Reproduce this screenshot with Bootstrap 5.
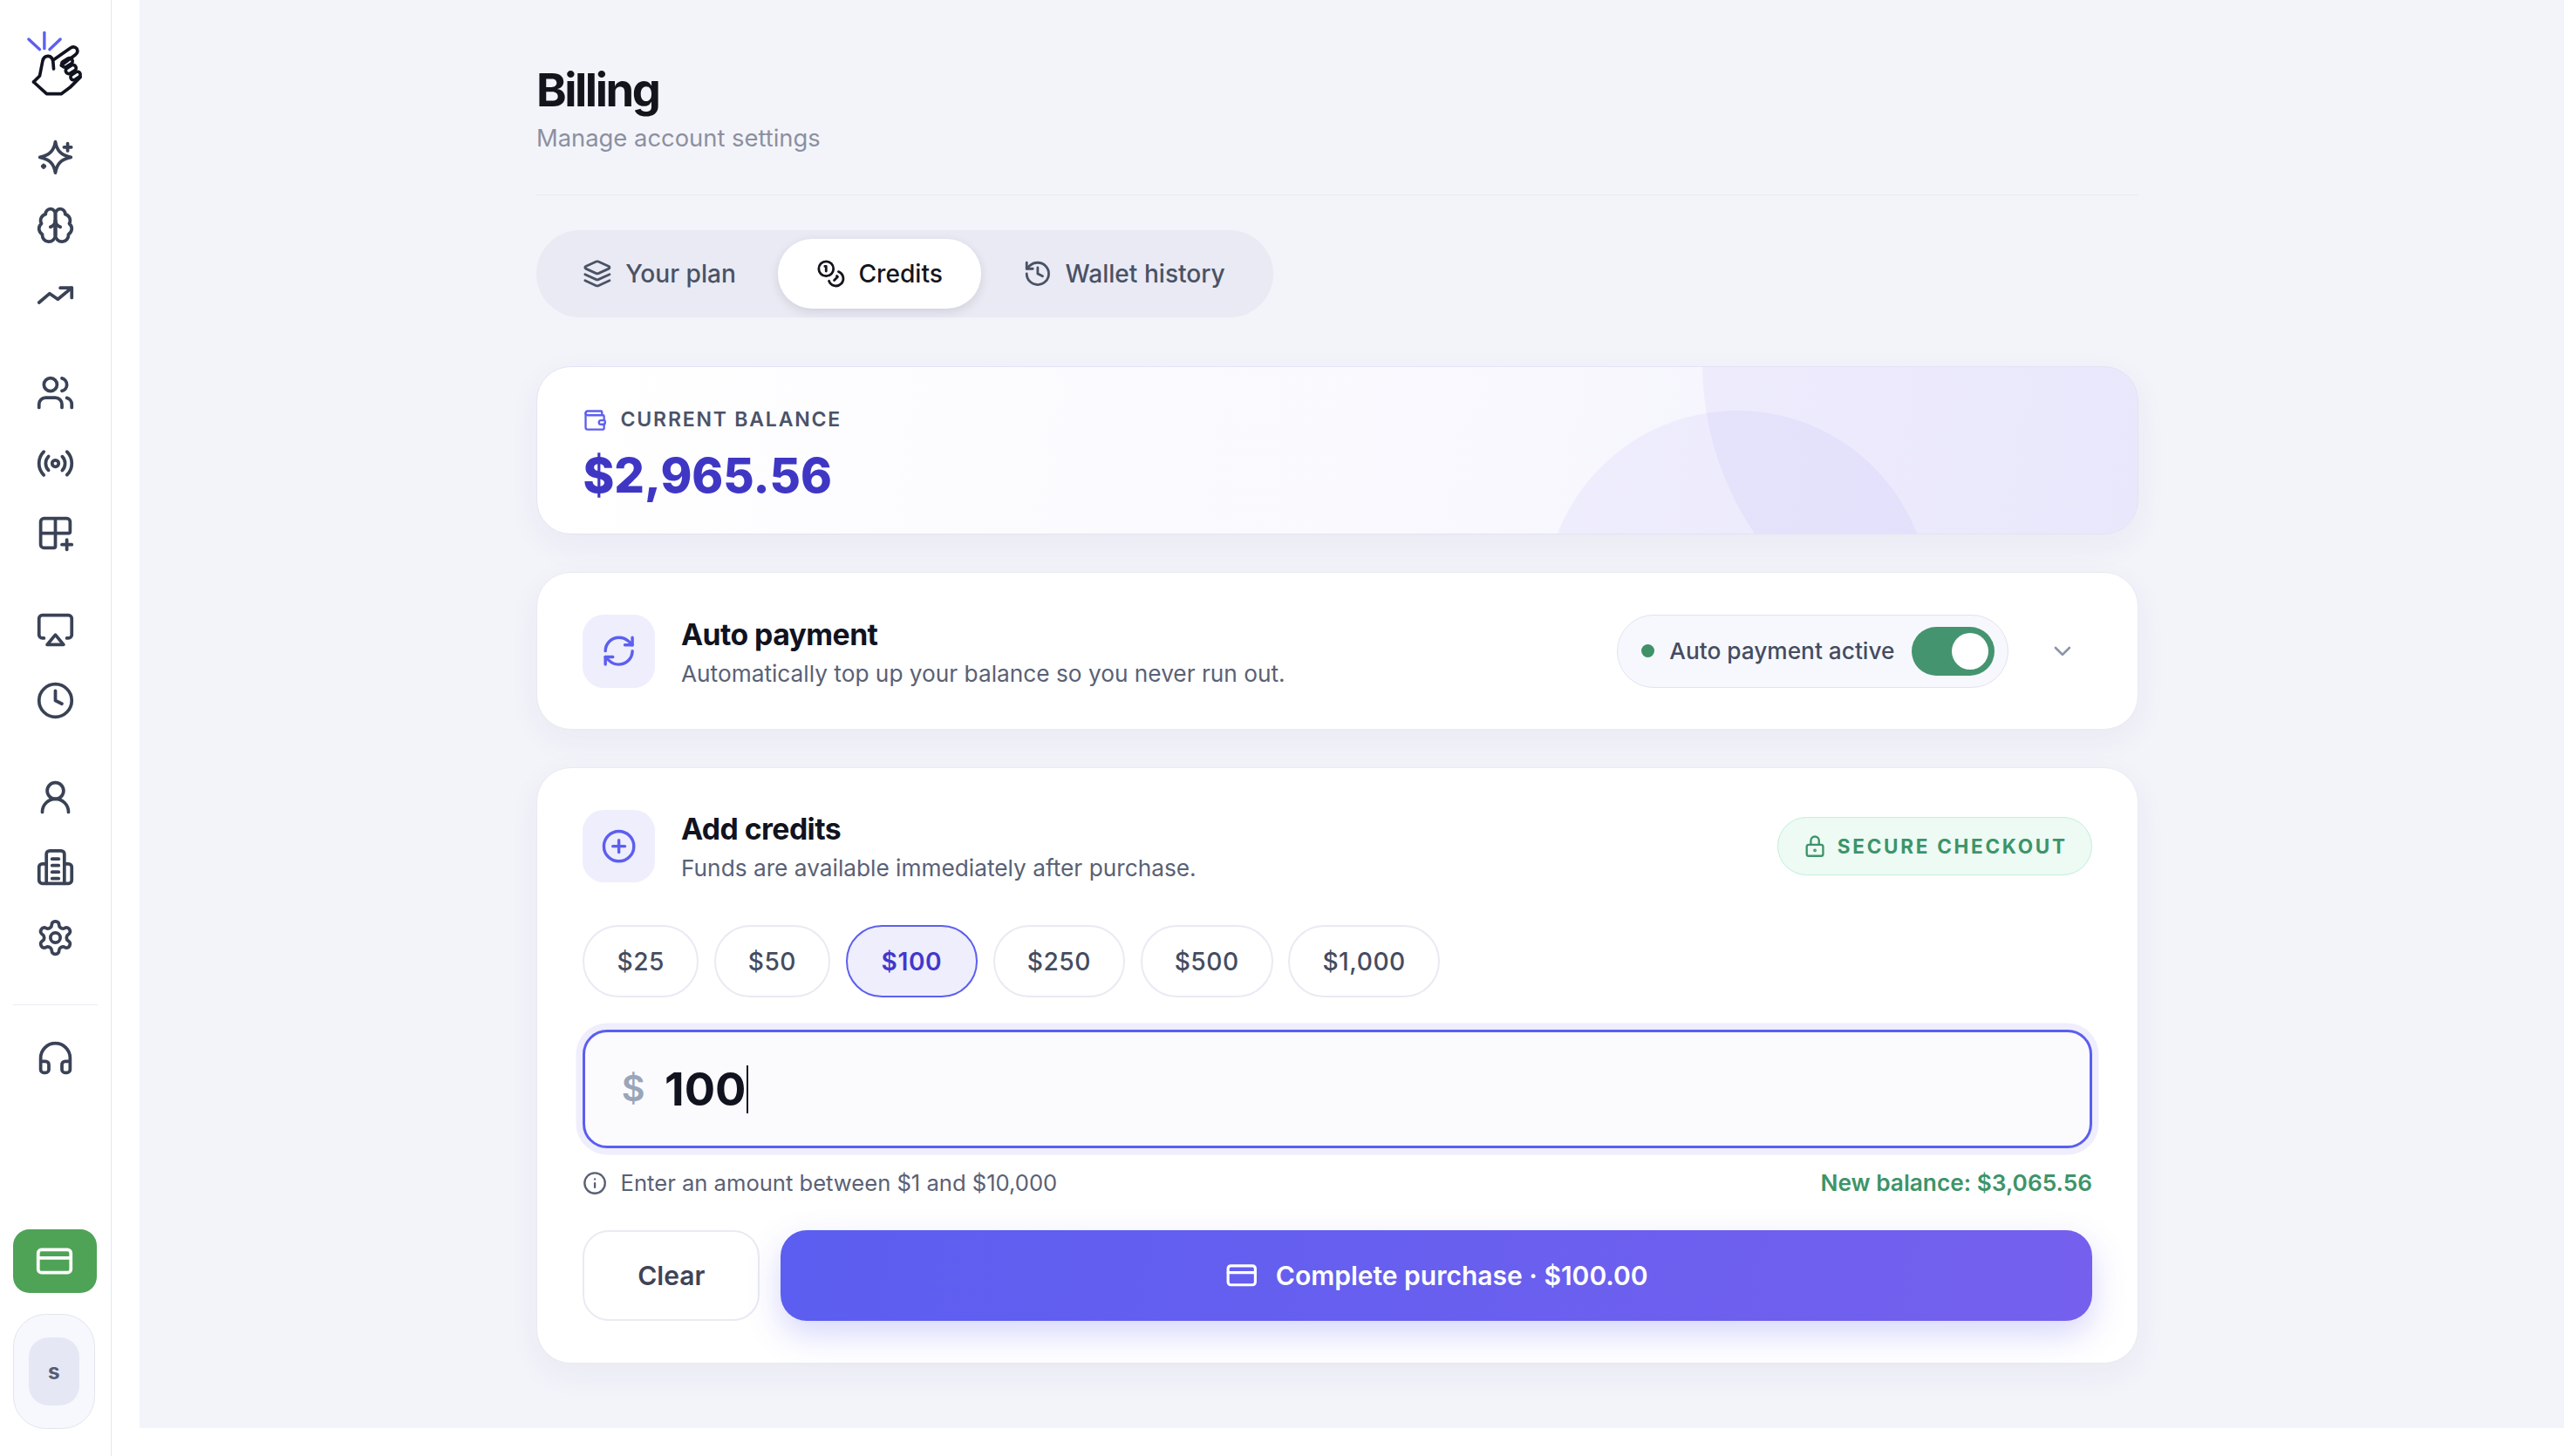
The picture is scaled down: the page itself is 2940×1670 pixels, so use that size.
<!DOCTYPE html>
<html lang="en">
<head>
  <meta charset="UTF-8" />
  <meta name="viewport" content="width=device-width, initial-scale=1.0" />
  <title>Billing</title>
  <link rel="stylesheet" href="https://cdn.jsdelivr.net/npm/bootstrap@5.3.0/dist/css/bootstrap.min.css" />
  <style>
    html { zoom: 1.875; overflow: hidden; }
    body {
      font-family: Inter, "Liberation Sans", sans-serif;
      background: #fff;
      overflow: hidden;
    }
    svg.ico { fill: none; stroke: currentColor; stroke-width: 2; stroke-linecap: round; stroke-linejoin: round; flex-shrink: 0; }
    .app-shell { height: 890.67px; }

    .side-rail {
      width: 68px;
      flex-shrink: 0;
      border-right: 1px solid #e5e6ee;
      color: #3a4256;
      padding: 13.3px 8px 16.7px 8px;
    }
    .rail-logo { margin-left: -8px; margin-right: -8px; margin-bottom: 12.2px; }
    .rail-group { margin-bottom: 16.2px; }
    .rail-item { height: 43px; color: inherit; }
    .rail-line { border-top: 1px solid #eceef2; margin-top: 19.4px; margin-bottom: 10.5px; }
    .rail-billing { height: 39px; background: #4fa357; color: #fff; border-radius: 10px; width: 51px; }
    .rail-user {
      height: 70px; width: 50px; margin-top: 13px;
      background: #f7f8fd; border: 1px solid #e3e5ec; border-radius: 20px;
    }
    .rail-avatar {
      width: 31px; height: 42px; border-radius: 12px; background: #e5e7f5;
      color: #555d73; font-size: 13px; font-weight: 700;
    }

    .main-pane {
      margin-left: 17.33px;
      height: 873.6px;
      background: #f3f4fa;
      padding: 38.4px 0 0 242.67px;
    }
    .page-col { width: 980px; }
    .page-title { font-size: 28px; font-weight: 700; letter-spacing: -1.3px; line-height: 33.6px; color: #14151c; margin: 0 0 1px; }
    .page-sub { font-size: 14.6px; line-height: 22.5px; color: #8b90a0; margin: 0; }
    .page-head { border-bottom: 1px solid #e9eaf1; padding-bottom: 23.5px; margin-bottom: 21px; }

    .tab-track { background: #e9eaf3; border-radius: 27px; padding: 5.5px; gap: 2.5px; width: 450.5px; height: 53.5px; flex-wrap: nowrap; }
    .tab-track .nav-link {
      display: flex; align-items: center; gap: 8px;
      height: 42.5px; padding: 0 23px; border-radius: 21px; white-space: nowrap;
      font-size: 15px; font-weight: 500; color: #4a5266;
    }
    .tab-track .nav-link.active { background: #fff; color: #14151c; box-shadow: 0 2px 6px rgba(30,30,60,.12); padding: 0 23.5px; }

    .bill-card {
      border: 1px solid #e9eaf2;
      border-radius: 21px;
      background: #fff;
      box-shadow: 0 6px 20px rgba(40,40,90,.05);
      margin-bottom: 23px;
    }
    .balance-card {
      height: 103px;
      margin-top: 30px;
      border-color: #e4e3f4;
      padding: 23.5px 28px;
      overflow: hidden;
      background: linear-gradient(100deg, #fff 0%, #f8f8fe 60%, #f2f1fc 100%);
    }
    .blob-a, .blob-b { position: absolute; border-radius: 50%; background: rgba(99,91,240,.06); }
    .blob-a { width: 370px; height: 370px; left: 712.5px; top: -187px; }
    .blob-b { width: 236px; height: 236px; left: 616px; top: 26.5px; }
    .balance-label { font-size: 12.3px; font-weight: 600; letter-spacing: .95px; color: #4b5368; line-height: 18px; position: relative; }
    .balance-icon { color: #5d5fef; }
    .balance-sum { font-size: 29px; font-weight: 800; color: #3f37c4; line-height: 38px; margin-top: 6px; position: relative; }

    .auto-card { height: 96.5px; padding: 0 28px; }
    .tile { width: 44px; height: 44.5px; border-radius: 13px; background: #eeeefd; color: #5d5fef; flex-shrink: 0; }
    .card-text-wrap { margin-top: 3px; }
    .card-name { font-size: 18px; font-weight: 700; letter-spacing: -.3px; color: #11131f; line-height: 24px; margin: 0; }
    .card-note { font-size: 14px; color: #5a6175; line-height: 24px; margin: 0; }
    .status-chip {
      width: 239.5px; height: 44.5px; padding: 0 8px 0 14px; gap: 9.5px;
      background: #f7f8fd; border: 1px solid #e2e2f2; border-radius: 23px;
      font-size: 14px; font-weight: 500; color: #454c60;
    }
    .status-dot { width: 8px; height: 8px; border-radius: 50%; background: #3f9168; flex-shrink: 0; }
    .status-chip .form-check { margin: 0 0 0 auto; padding: 0; min-height: 0; display: flex; }
    .status-chip .form-check-input { width: 51px; height: 30px; margin: 0; border: 0; background-color: #459470; cursor: pointer; }
    .chev { color: #8b94a8; margin-left: 24.5px; margin-right: 9.5px; }

    .credit-card { height: 364.5px; padding: 22px 28px 0; margin-bottom: 0; }
    .secure-tag {
      height: 36px; padding: 0 14.5px; gap: 6.5px; background: #edfbf4; border: 1px solid #c3eeda; border-radius: 18px;
      font-size: 12px; font-weight: 700; letter-spacing: 1.45px; color: #3d9469;
    }
    .preset-row { gap: 9.5px; margin-top: 23px; }
    .preset-btn {
      height: 44px; padding: 0 19.7px; border-radius: 22px; background: #fff;
      border: 1.5px solid #e9eaf3; color: #454c60; font-size: 15px; font-weight: 500; letter-spacing: .3px;
    }
    .preset-btn.active, .preset-btn.active:hover { background: #eeeefd; border-color: #5d5fef; color: #4338ca; font-weight: 600; padding: 0 20.7px; }
    .amount-box {
      height: 72.5px; margin-top: 20px; padding: 0 22px; gap: 12px;
      background: #fbfbfe; border: 2px solid #5b5ef0; border-radius: 15px;
      box-shadow: 0 0 0 4px #efeefc;
    }
    .amount-sign { font-size: 22px; font-weight: 600; color: #9aa5b8; }
    .amount-num { font-size: 28px; font-weight: 700; color: #11131f; line-height: 30px; }
    .amount-caret { width: 1.5px; height: 29px; background: #11131f; margin-left: -12px; }
    .hint-row { margin-top: 11px; font-size: 13.65px; line-height: 20px; color: #5a6175; }
    .hint-new { color: #3d9469; font-weight: 600; font-size: 14px; }
    .action-row { gap: 13px; margin-top: 19px; }
    .clear-btn {
      width: 108px; height: 55.5px; border-radius: 16px; background: #fff;
      border: 1.5px solid #e9eaf3; color: #3f4356; font-size: 16px; font-weight: 600;
    }
    .buy-btn {
      height: 55.5px; border-radius: 16px; border: 0; gap: 11px; color: #fff;
      background: linear-gradient(100deg, #5b5ef0, #7560ee);
      box-shadow: 0 8px 20px rgba(93,95,239,.25);
      font-size: 16px; font-weight: 600;
    }
    .buy-btn:hover, .buy-btn:active { color: #fff; background: linear-gradient(100deg, #5b5ef0, #7560ee); }
  </style>
</head>
<body>
<div class="app-shell d-flex">

  <!-- left rail -->
  <aside class="side-rail d-flex flex-column">
    <a class="rail-logo d-block" href="#">
      <svg class="d-block mx-auto" width="48" height="48" viewBox="-6.6 0 270 270" fill="none" stroke-linecap="round" stroke-linejoin="round">
        <g stroke="#5d5fef" stroke-width="10"><path d="M92 37v55"/><path d="M38 60l38 35"/><path d="M147 60l-37 35"/></g>
        <g stroke="#11131f" stroke-width="11">
          <path d="M122 132 182 90Q195 82 204 93Q210 105 198 114L150 150"/>
          <path d="M55 207 76 186 86 135Q90 117 106 118Q120 120 122 138L124 162"/>
          <path d="M55 207 100 248H150L180 226 216 190"/>
          <rect x="150" y="130" width="40" height="21" rx="10" transform="rotate(-32 170 140)"/>
          <rect x="164" y="153" width="38" height="21" rx="10" transform="rotate(-32 183 163)"/>
          <rect x="181" y="176" width="36" height="20" rx="10" transform="rotate(-32 199 186)"/>
        </g>
      </svg>
    </a>

    <div class="rail-group">
      <a class="rail-item d-flex align-items-center justify-content-center" href="#">
        <svg class="ico" width="24" height="24" viewBox="0 0 24 24"><path d="M12 3.500c.8 5 3 8.200 9.500 9.500-6.500 1.300-8.700 4.500-9.500 9.500-.8-5-3-8.200-9.500-9.500 6.500-1.300 8.700-4.500 9.500-9.500z"/><path d="M19.500 4.600v4.400"/><path d="M17.300 6.800h4.400"/><path d="M4.800 17.800v1.400"/><path d="M4.100 18.500h1.400"/></svg>
      </a>
      <a class="rail-item d-flex align-items-center justify-content-center" href="#">
        <svg class="ico" width="24" height="24" viewBox="0 0 24 24"><path d="M12 5a3 3 0 1 0-5.997.125 4 4 0 0 0-2.526 5.770 4 4 0 0 0 .556 6.588A4 4 0 1 0 12 18Z"/><path d="M12 5a3 3 0 1 1 5.997.125 4 4 0 0 1 2.526 5.770 4 4 0 0 1-.556 6.588A4 4 0 1 1 12 18Z"/><path d="M15 13a4.500 4.500 0 0 1-3-4 4.500 4.500 0 0 1-3 4"/><path d="M12 9v9"/></svg>
      </a>
      <a class="rail-item d-flex align-items-center justify-content-center" href="#">
        <svg class="ico" width="24" height="24" viewBox="0 0 24 24"><polyline points="22 7 13.500 14 8.500 10.500 2 16"/><polyline points="15 7 22 7 22 13"/></svg>
      </a>
    </div>

    <div class="rail-group">
      <a class="rail-item d-flex align-items-center justify-content-center" href="#">
        <svg class="ico" width="24" height="24" viewBox="0 0 24 24"><path d="M16 21v-2a4 4 0 0 0-4-4H6a4 4 0 0 0-4 4v2"/><circle cx="9" cy="7" r="4"/><path d="M22 21v-2a4 4 0 0 0-3-3.870"/><path d="M16 3.130a4 4 0 0 1 0 7.750"/></svg>
      </a>
      <a class="rail-item d-flex align-items-center justify-content-center" href="#">
        <svg class="ico" width="24" height="24" viewBox="0 0 24 24"><path d="M4.900 19.100C1 15.200 1 8.800 4.900 4.900"/><path d="M7.800 16.200c-2.300-2.300-2.300-6.100 0-8.500"/><circle cx="12" cy="12" r="2"/><path d="M16.200 7.800c2.300 2.300 2.300 6.100 0 8.500"/><path d="M19.100 4.900C23 8.800 23 15.100 19.100 19"/></svg>
      </a>
      <a class="rail-item d-flex align-items-center justify-content-center" href="#">
        <svg class="ico" width="24" height="24" viewBox="0 0 24 24"><path d="M12 3v17a1 1 0 0 1-1 1H5a2 2 0 0 1-2-2V5a2 2 0 0 1 2-2h14a2 2 0 0 1 2 2v6a1 1 0 0 1-1 1H3"/><path d="M16 19h6"/><path d="M19 22v-6"/></svg>
      </a>
    </div>

    <div class="rail-group">
      <a class="rail-item d-flex align-items-center justify-content-center" href="#">
        <svg class="ico" width="24" height="24" viewBox="0 0 24 24"><path d="M5 17H4a2 2 0 0 1-2-2V5a2 2 0 0 1 2-2h16a2 2 0 0 1 2 2v10a2 2 0 0 1-2 2h-1"/><polygon points="12 15 17 21 7 21"/></svg>
      </a>
      <a class="rail-item d-flex align-items-center justify-content-center" href="#">
        <svg class="ico" width="24" height="24" viewBox="0 0 24 24"><circle cx="12" cy="12" r="10"/><polyline points="12 6 12 12 16 14"/></svg>
      </a>
    </div>

    <div>
      <a class="rail-item d-flex align-items-center justify-content-center" href="#">
        <svg class="ico" width="24" height="24" viewBox="0 0 24 24"><circle cx="12" cy="8" r="5"/><path d="M20 21a8 8 0 0 0-16 0"/></svg>
      </a>
      <a class="rail-item d-flex align-items-center justify-content-center" href="#">
        <svg class="ico" width="24" height="24" viewBox="0 0 24 24"><path d="M6.500 22V4a2 2 0 0 1 2-2h7a2 2 0 0 1 2 2v18"/><path d="M6.500 10H4a2 2 0 0 0-2 2v8a2 2 0 0 0 2 2h16a2 2 0 0 0 2-2v-8a2 2 0 0 0-2-2h-2.500"/><path d="M10 7h4"/><path d="M10 11h4"/><path d="M10 15h4"/><path d="M10 19h4"/></svg>
      </a>
      <a class="rail-item d-flex align-items-center justify-content-center" href="#">
        <svg class="ico" width="24" height="24" viewBox="0 0 24 24"><path d="M12.220 2h-.44a2 2 0 0 0-2 2v.18a2 2 0 0 1-1 1.730l-.43.25a2 2 0 0 1-2 0l-.15-.08a2 2 0 0 0-2.730.73l-.22.38a2 2 0 0 0 .73 2.730l.15.1a2 2 0 0 1 1 1.720v.51a2 2 0 0 1-1 1.740l-.15.09a2 2 0 0 0-.73 2.730l.22.38a2 2 0 0 0 2.730.73l.15-.08a2 2 0 0 1 2 0l.43.25a2 2 0 0 1 1 1.730V20a2 2 0 0 0 2 2h.44a2 2 0 0 0 2-2v-.18a2 2 0 0 1 1-1.730l.43-.25a2 2 0 0 1 2 0l.15.08a2 2 0 0 0 2.730-.73l.22-.39a2 2 0 0 0-.73-2.730l-.15-.08a2 2 0 0 1-1-1.740v-.5a2 2 0 0 1 1-1.740l.15-.09a2 2 0 0 0 .73-2.730l-.22-.38a2 2 0 0 0-2.730-.73l-.15.08a2 2 0 0 1-2 0l-.43-.25a2 2 0 0 1-1-1.730V4a2 2 0 0 0-2-2z"/><circle cx="12" cy="12" r="3"/></svg>
      </a>
    </div>

    <div class="rail-line"></div>
    <a class="rail-item d-flex align-items-center justify-content-center" href="#">
      <svg class="ico" width="24" height="24" viewBox="0 0 24 24"><path d="M3 14h3a2 2 0 0 1 2 2v3a2 2 0 0 1-2 2H5a2 2 0 0 1-2-2v-7a9 9 0 0 1 18 0v7a2 2 0 0 1-2 2h-1a2 2 0 0 1-2-2v-3a2 2 0 0 1 2-2h3"/></svg>
    </a>

    <a class="rail-billing mt-auto d-flex align-items-center justify-content-center" href="#">
      <svg class="ico" width="24" height="24" viewBox="0 0 24 24"><rect x="2" y="5" width="20" height="14" rx="2"/><line x1="2" y1="10" x2="22" y2="10"/></svg>
    </a>
    <div class="rail-user d-flex align-items-center justify-content-center">
      <div class="rail-avatar d-flex align-items-center justify-content-center">s</div>
    </div>
  </aside>

  <!-- page -->
  <main class="main-pane flex-grow-1">
    <div class="page-col">
      <div class="page-head">
        <h1 class="page-title">Billing</h1>
        <p class="page-sub">Manage account settings</p>
      </div>

      <ul class="nav tab-track">
        <li class="nav-item"><a class="nav-link" href="#">
          <svg class="ico" width="18" height="18" viewBox="0 0 24 24"><path d="m12.830 2.180a2 2 0 0 0-1.660 0L2.600 6.080a1 1 0 0 0 0 1.830l8.580 3.910a2 2 0 0 0 1.660 0l8.580-3.900a1 1 0 0 0 0-1.830Z"/><path d="m22 17.650-9.170 4.160a2 2 0 0 1-1.660 0L2 17.650"/><path d="m22 12.650-9.170 4.160a2 2 0 0 1-1.660 0L2 12.650"/></svg>
          Your plan</a></li>
        <li class="nav-item"><a class="nav-link active" href="#">
          <svg class="ico" width="18" height="18" viewBox="0 0 24 24"><circle cx="8" cy="8" r="6"/><path d="M18.090 10.370A6 6 0 1 1 10.340 18"/><path d="M7 6h1v4"/><path d="m16.710 13.880.7.71-2.820 2.820"/></svg>
          Credits</a></li>
        <li class="nav-item"><a class="nav-link" href="#">
          <svg class="ico" width="18" height="18" viewBox="0 0 24 24"><path d="M3 12a9 9 0 1 0 9-9 9.750 9.750 0 0 0-6.740 2.740L3 8"/><path d="M3 3v5h5"/><path d="M12 7v5l4 2"/></svg>
          Wallet history</a></li>
      </ul>

      <!-- balance -->
      <div class="card bill-card balance-card">
        <span class="blob-a"></span>
        <span class="blob-b"></span>
        <div class="balance-label d-flex align-items-center gap-2">
          <svg class="ico balance-icon" width="15" height="15" viewBox="0 0 24 24"><path d="M19 7V4a1 1 0 0 0-1-1H5a2 2 0 0 0 0 4h15a1 1 0 0 1 1 1v4h-3a2 2 0 0 0 0 4h3a1 1 0 0 0 1-1v-2a1 1 0 0 0-1-1"/><path d="M3 5v14a2 2 0 0 0 2 2h15a1 1 0 0 0 1-1v-4"/></svg>
          CURRENT BALANCE
        </div>
        <div class="balance-sum">$2,965.56</div>
      </div>

      <!-- auto payment -->
      <div class="card bill-card auto-card flex-row align-items-center">
        <div class="tile d-flex align-items-center justify-content-center">
          <svg class="ico" width="22" height="22" viewBox="0 0 24 24"><path d="M3 12a9 9 0 0 1 9-9 9.750 9.750 0 0 1 6.740 2.740L21 8"/><path d="M21 3v5h-5"/><path d="M21 12a9 9 0 0 1-9 9 9.750 9.750 0 0 1-6.740-2.740L3 16"/><path d="M8 16H3v5"/></svg>
        </div>
        <div class="ms-3 card-text-wrap">
          <h2 class="card-name">Auto payment</h2>
          <p class="card-note">Automatically top up your balance so you never run out.</p>
        </div>
        <div class="status-chip ms-auto d-flex align-items-center">
          <span class="status-dot"></span>
          <span>Auto payment active</span>
          <div class="form-check form-switch"><input class="form-check-input" type="checkbox" role="switch" checked /></div>
        </div>
        <svg class="ico chev" width="17" height="17" viewBox="0 0 24 24"><path d="m6 9 6 6 6-6"/></svg>
      </div>

      <!-- add credits -->
      <div class="card bill-card credit-card">
        <div class="d-flex align-items-center">
          <div class="tile d-flex align-items-center justify-content-center">
            <svg class="ico" width="22" height="22" viewBox="0 0 24 24"><circle cx="12" cy="12" r="10"/><path d="M8 12h8"/><path d="M12 8v8"/></svg>
          </div>
          <div class="ms-3 card-text-wrap">
            <h2 class="card-name">Add credits</h2>
            <p class="card-note">Funds are available immediately after purchase.</p>
          </div>
          <div class="secure-tag ms-auto d-flex align-items-center">
            <svg class="ico" width="15" height="15" viewBox="0 0 24 24"><rect x="4" y="11" width="16" height="11" rx="2"/><path d="M8 11V7a4 4 0 0 1 8 0v4"/><circle cx="12" cy="16.500" r=".6"/></svg>
            SECURE CHECKOUT
          </div>
        </div>

        <div class="preset-row d-flex">
          <button class="btn preset-btn" type="button">$25</button>
          <button class="btn preset-btn" type="button">$50</button>
          <button class="btn preset-btn active" type="button">$100</button>
          <button class="btn preset-btn" type="button">$250</button>
          <button class="btn preset-btn" type="button">$500</button>
          <button class="btn preset-btn" type="button">$1,000</button>
        </div>

        <div class="amount-box d-flex align-items-center">
          <span class="amount-sign">$</span>
          <span class="amount-num">100</span>
          <span class="amount-caret"></span>
        </div>

        <div class="hint-row d-flex align-items-center justify-content-between">
          <span class="d-flex align-items-center gap-2">
            <svg class="ico" width="15" height="15" viewBox="0 0 24 24"><circle cx="12" cy="12" r="10"/><path d="M12 16v-4"/><path d="M12 8h.01"/></svg>
            Enter an amount between $1 and $10,000
          </span>
          <span class="hint-new">New balance: $3,065.56</span>
        </div>

        <div class="action-row d-flex">
          <button class="btn clear-btn" type="button">Clear</button>
          <button class="btn buy-btn flex-grow-1 d-flex align-items-center justify-content-center" type="button">
            <svg class="ico" width="20" height="20" viewBox="0 0 24 24"><rect x="2" y="5" width="20" height="14" rx="2"/><line x1="2" y1="10" x2="22" y2="10"/></svg>
            Complete purchase · $100.00
          </button>
        </div>
      </div>
    </div>
  </main>
</div>
<script src="https://cdn.jsdelivr.net/npm/bootstrap@5.3.0/dist/js/bootstrap.bundle.min.js"></script>
</body>
</html>
